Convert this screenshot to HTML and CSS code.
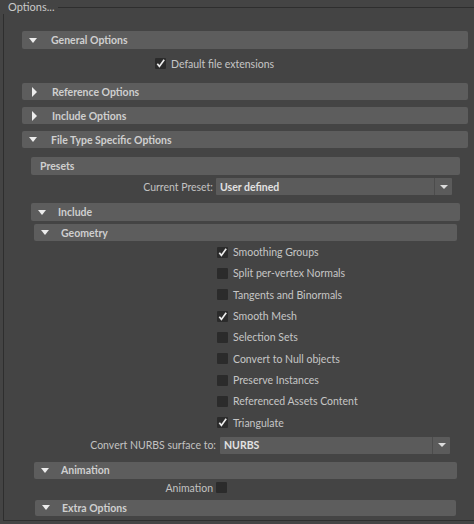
FILE: index.html
```html
<!DOCTYPE html>
<html>
<head>
<meta charset="utf-8">
<link rel="stylesheet" href="styles.css">
</head>
<body>
<fieldset class="frame">
  <legend class="legend">Options...</legend>
  <div class="top">
    <div class="bar bar-18"><span class="tri-down"></span><span class="title">General Options</span></div>
    <div class="general-body">
      <label class="cb-row gen-cb"><span class="cb checked"><svg viewBox="0 0 11 11" width="11" height="11"><path d="M2.3 5.8 L4.4 8.4 L9.2 1.8" fill="none" stroke="#ececec" stroke-width="1.7"/></svg></span><span class="cb-text">Default file extensions</span></label>
    </div>
    <div class="bar bar-17 gap7"><span class="tri-right"></span><span class="title">Reference Options</span></div>
    <div class="bar bar-17 gap7"><span class="tri-right"></span><span class="title">Include Options</span></div>
    <div class="bar bar-17 gap7"><span class="tri-down"></span><span class="title">File Type Specific Options</span></div>
    <div class="ft-body">
      <div class="bar bar-18 plain"><span class="title">Presets</span></div>
      <div class="field-row preset-row">
        <span class="label">Current Preset:</span>
        <div class="dropdown"><span class="dd-text">User defined</span><span class="dd-arrow"><span class="arrow"></span></span></div>
      </div>
      <div class="bar bar-18 sub gap8"><span class="tri-down"></span><span class="title">Include</span></div>
      <div class="inc-body">
        <div class="bar bar-17 sub gap3"><span class="tri-down"></span><span class="title">Geometry</span></div>
        <div class="geo-body">
          <div class="check-list">
            <label class="cb-row geo-cb"><span class="cb"><svg viewBox="0 0 11 11" width="11" height="11"><path d="M2.3 5.8 L4.4 8.4 L9.2 1.8" fill="none" stroke="#ececec" stroke-width="1.7"/></svg></span><span class="cb-text">Smoothing Groups</span></label>
            <label class="cb-row geo-cb"><span class="cb"></span><span class="cb-text">Split per-vertex Normals</span></label>
            <label class="cb-row geo-cb"><span class="cb"></span><span class="cb-text">Tangents and Binormals</span></label>
            <label class="cb-row geo-cb"><span class="cb"><svg viewBox="0 0 11 11" width="11" height="11"><path d="M2.3 5.8 L4.4 8.4 L9.2 1.8" fill="none" stroke="#ececec" stroke-width="1.7"/></svg></span><span class="cb-text">Smooth Mesh</span></label>
            <label class="cb-row geo-cb"><span class="cb"></span><span class="cb-text">Selection Sets</span></label>
            <label class="cb-row geo-cb"><span class="cb"></span><span class="cb-text">Convert to Null objects</span></label>
            <label class="cb-row geo-cb"><span class="cb"></span><span class="cb-text">Preserve Instances</span></label>
            <label class="cb-row geo-cb"><span class="cb"></span><span class="cb-text">Referenced Assets Content</span></label>
            <label class="cb-row geo-cb"><span class="cb"><svg viewBox="0 0 11 11" width="11" height="11"><path d="M2.3 5.8 L4.4 8.4 L9.2 1.8" fill="none" stroke="#ececec" stroke-width="1.7"/></svg></span><span class="cb-text">Triangulate</span></label>
          </div>
          <div class="field-row nurbs-row">
            <span class="label">Convert NURBS surface to:</span>
            <div class="dropdown"><span class="dd-text">NURBS</span><span class="dd-arrow"><span class="arrow"></span></span></div>
          </div>
        </div>
        <div class="bar bar-17 sub gap8"><span class="tri-down"></span><span class="title">Animation</span></div>
        <div class="field-row anim-row">
          <span class="label anim-label">Animation</span>
          <span class="cb"></span>
        </div>
        <div class="bar bar-16 sub extra gap3"><span class="tri-down"></span><span class="title">Extra Options</span></div>
      </div>
    </div>
  </div>
</fieldset>
</body>
</html>
```
FILE: styles.css
```css
html, body {
  margin: 0;
  padding: 0;
  background: #444444;
  height: 524px;
  overflow: hidden;
}
body {
  font-family: Lato, "Open Sans", sans-serif;
  font-size: 10.5px;
  color: #c4c4c4;
}
.frame {
  margin: 0 0 0 3px;
  padding: 17px 0 4px 0;
  border: 1px solid #2e2e2e;
  border-right: none;
  min-width: 0;
}
.legend {
  padding: 0 3px 0 5px;
  margin-left: -1px;
  line-height: 14px;
  font-size: 11px;
  color: #c9c9c9;
}
.top {
  margin: 0 6px 0 18px;
  display: flex;
  flex-direction: column;
}
.bar {
  background: #5d5d5d;
  border-radius: 2px;
  display: flex;
  align-items: center;
  font-weight: 700;
  color: #cfcfcf;
  padding-left: 7px;
}
.bar-18 { height: 18px; }
.bar-17 { height: 17px; }
.bar-16 { height: 16px; }
.gap7 { margin-top: 7px; }
.gap8 { margin-top: 8px; }
.gap3 { margin-top: 3px; }
.bar .title { margin-left: 14px; }
.bar.sub .title { margin-left: 12px; }
.bar.plain { padding-left: 9px; }
.bar.plain .title { margin-left: 0; }
.tri-down {
  width: 0;
  height: 0;
  border-left: 4.5px solid transparent;
  border-right: 4.5px solid transparent;
  border-top: 5px solid #ececec;
}
.tri-right {
  width: 0;
  height: 0;
  border-top: 5px solid transparent;
  border-bottom: 5px solid transparent;
  border-left: 5px solid #ececec;
  margin-left: 3px;
  margin-right: 1px;
}
.general-body {
  padding: 4px 0 2px;
}
.cb-row {
  display: flex;
  align-items: center;
  gap: 5px;
}
.gen-cb {
  height: 21px;
  padding-left: 133px;
}
.cb {
  width: 11px;
  height: 11px;
  background: #2b2b2b;
  border-radius: 1px;
  flex: none;
  display: block;
}
.cb svg { display: block; overflow: visible; }
.cb-text { color: #c6c6c6; }
.ft-body {
  margin: 9px 8px 0 9px;
  display: flex;
  flex-direction: column;
}
.field-row {
  display: flex;
  align-items: center;
}
.label {
  width: 182px;
  text-align: right;
  color: #c2c2c2;
  flex: none;
}
.preset-row {
  margin-top: 3px;
  height: 17px;
  padding-right: 8px;
}
.preset-row .label { margin-right: 3px; }
.dropdown {
  flex: 1;
  height: 17px;
  background: #5b5b5b;
  border-radius: 1px;
  display: flex;
  align-items: center;
}
.dd-text {
  flex: 1;
  padding-left: 4px;
  font-weight: 700;
  color: #e2e2e2;
}
.dd-arrow {
  width: 17px;
  height: 17px;
  border-left: 1px solid #4c4c4c;
  display: flex;
  align-items: center;
  justify-content: center;
}
.arrow {
  width: 0;
  height: 0;
  border-left: 4px solid transparent;
  border-right: 4px solid transparent;
  border-top: 4px solid #dcdcdc;
}
.inc-body {
  margin: 0 3px;
  display: flex;
  flex-direction: column;
}
.geo-body {
  display: flex;
  flex-direction: column;
}
.check-list {
  padding-top: 0.5px;
}
.geo-cb {
  height: 21.333px;
  padding-left: 183px;
}
.nurbs-row {
  margin-top: 3.5px;
  height: 17px;
  padding-right: 7px;
}
.nurbs-row .label { margin-right: 4px; }
.anim-row {
  height: 18px;
}
.label.anim-label { width: 179px; margin-right: 3px; }
.extra { margin-left: 1px; margin-right: 1px; }
```
